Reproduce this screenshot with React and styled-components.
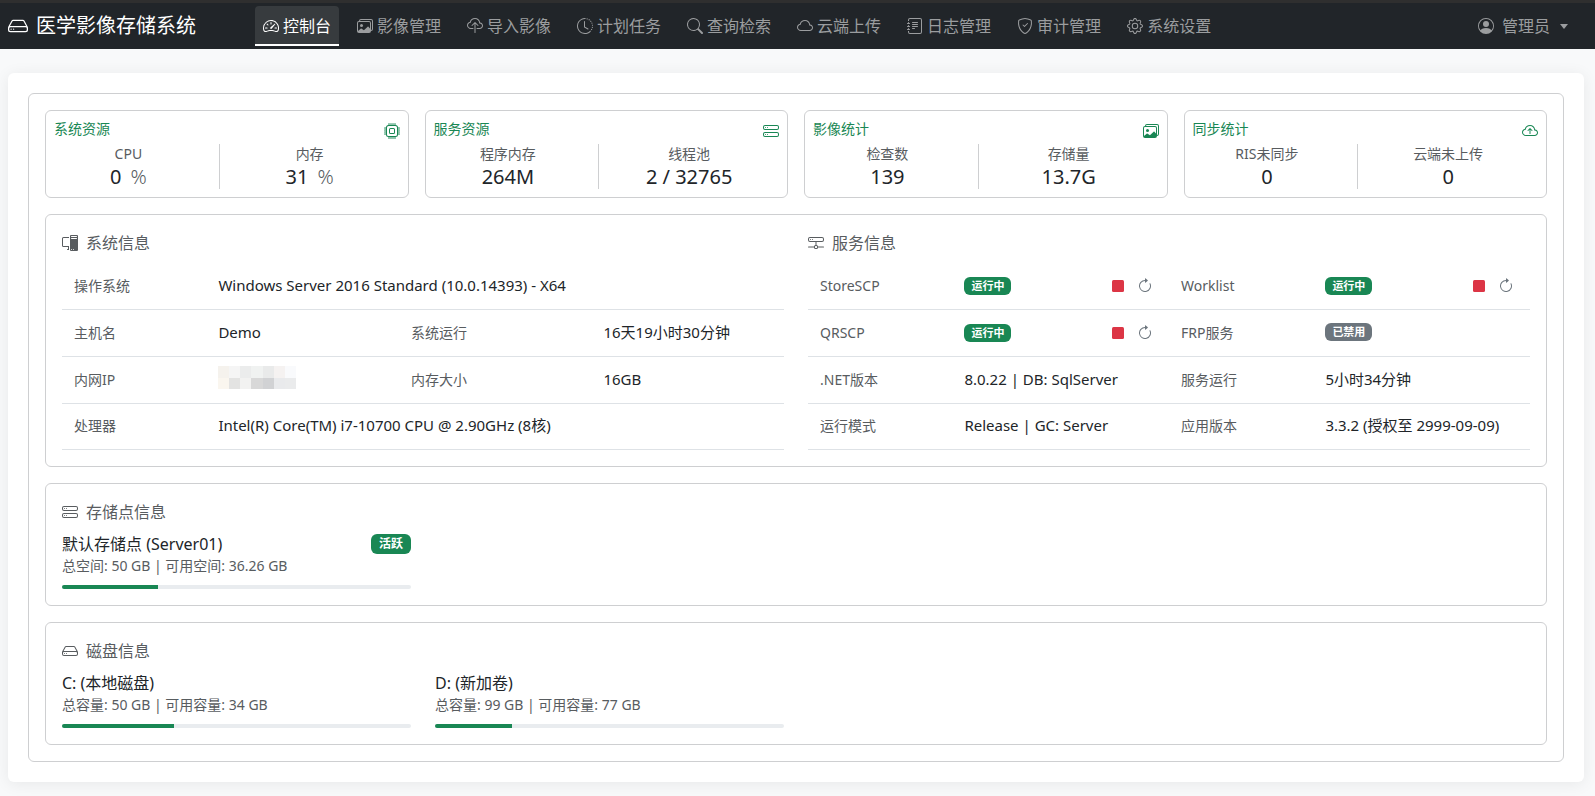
import React from "react";
import styled, { createGlobalStyle, css } from "styled-components";
import {
  BsHdd,
  BsSpeedometer2,
  BsImages,
  BsCloudUpload,
  BsClockHistory,
  BsSearch,
  BsCloud,
  BsJournalText,
  BsShieldCheck,
  BsGear,
  BsPersonCircle,
  BsCpu,
  BsHddStack,
  BsCloudArrowUp,
  BsPcDisplay,
  BsHddNetwork,
  BsSquareFill,
  BsArrowClockwise,
} from "react-icons/bs";

const GlobalStyle = createGlobalStyle`
  *, *::before, *::after { box-sizing: border-box; }
  body {
    margin: 0;
    background: #f8f9fa;
    color: #212529;
    font: 400 16px/24px "Noto Sans", "Noto Sans CJK SC", sans-serif;
  }
  svg { display: block; flex: none; }
`;

const colors = {
  green: "#198754",
  red: "#dc3545",
  gray: "#6c757d",
  muted: "#585c5f",
  border: "#cecfd1",
  line: "#dee2e6",
};

/* ---------- header ---------- */

const Header = styled.header`
  display: flex;
  align-items: center;
  padding: 3px 19px 3px 8px;
  background: #212529;
  border-top: 3px solid #2f2f2f;
`;

const Brand = styled.a`
  display: flex;
  align-items: center;
  gap: 8px;
  width: 247px;
  color: #fff;
  font-size: 20px;
  white-space: nowrap;
  text-decoration: none;
`;

const Nav = styled.nav`
  display: flex;
  flex: 1;
  gap: 10px;
`;

const linkBase = css`
  display: flex;
  align-items: center;
  color: #9b9d9f;
  white-space: nowrap;
`;

const NavLink = styled.a`
  ${linkBase}
  gap: 4px;
  height: 40px;
  padding: 2px 8px 0;
  border-bottom: 2px solid transparent;
  border-radius: 4px 4px 0 0;
  text-decoration: none;
  ${({ $active }) =>
    $active &&
    css`
      color: #fff;
      background: #373b3e;
      border-bottom-color: #fff;
    `}
`;

const UserButton = styled.button`
  ${linkBase}
  gap: 8px;
  padding: 8px;
  border: 0;
  background: none;
  font: inherit;
`;

const Caret = styled.span`
  margin-left: 2px;
  border: 4px solid transparent;
  border-top: 5px solid currentColor;
  border-bottom: 0;
`;

/* ---------- page frame ---------- */

const Main = styled.main`
  padding: 24px 11px 14px 8px;
`;

const Sheet = styled.div`
  padding: 20px;
  background: #fff;
  border-radius: 6px;
  box-shadow: 0 2px 16px rgba(0, 0, 0, 0.07);
`;

const Frame = styled.div`
  display: grid;
  gap: 16px;
  padding: 16px;
  border: 1px solid ${colors.border};
  border-radius: 6px;
`;

const Stats = styled.div`
  display: grid;
  grid-template-columns: repeat(4, 1fr);
  gap: 16px;
`;

/* ---------- stat cards ---------- */

const StatCard = styled.section`
  padding: 8px;
  border: 1px solid ${colors.border};
  border-radius: 6px;
`;

const StatHead = styled.div`
  display: flex;
  justify-content: space-between;
  height: 25px;
  color: ${colors.green};

  svg { margin-top: 4px; }
`;

const StatTitle = styled.h2`
  margin: 0;
  font-size: 14px;
  font-weight: 400;
  line-height: 19px;
`;

const StatPair = styled.div`
  display: grid;
  grid-template-columns: 1fr 1fr;
  margin-left: -16px;
  text-align: center;
`;

const Stat = styled.div`
  & + & { border-left: 1px solid ${colors.border}; }
`;

const StatLabel = styled.div`
  margin-bottom: 2px;
  color: ${colors.muted};
  font-size: 14px;
  line-height: 19px;
`;

const StatValue = styled.div`
  font-size: 20px;
  line-height: 24px;
`;

const Unit = styled.span`
  margin-left: 4px;
  color: ${colors.muted};
  font-weight: 300;
`;

/* ---------- panels ---------- */

const PanelBox = styled.section`
  padding: 16px;
  border: 1px solid ${colors.border};
  border-radius: 6px;
`;

const Heading = styled.h2`
  display: flex;
  align-items: center;
  gap: 8px;
  margin: 0 0 8px;
  color: ${colors.muted};
  font-size: 16px;
  font-weight: 400;
`;

const Halves = styled.div`
  display: grid;
  grid-template-columns: 1fr 1fr;
  gap: 24px;
`;

const InfoTable = styled.table`
  width: 100%;
  table-layout: fixed;
  border-collapse: separate;
  border-spacing: 0;
  line-height: 21px;
`;

const Col = styled.col`
  width: ${({ $width }) => $width || "auto"};
`;

const Row = styled.tr`
  th, td {
    height: 47px;
    padding: 0 12px 2px;
    border-bottom: 1px solid ${colors.line};
    text-align: left;
    white-space: nowrap;
  }
  &:last-child th, &:last-child td { height: 46px; }
  th { color: ${colors.muted}; font-size: 14px; font-weight: 400; }
  td { font-size: 15px; }
`;

const ServiceState = styled.div`
  display: flex;
  align-items: center;
  justify-content: space-between;
  padding-top: ${({ $running }) => ($running ? 2 : 0)}px;
`;

const Badge = styled.span`
  padding: 0 ${({ $large }) => ($large ? 8 : 7)}px;
  border-radius: 6px;
  background: ${({ $off }) => ($off ? colors.gray : colors.green)};
  color: #fff;
  font-size: ${({ $large }) => ($large ? 12 : 11)}px;
  font-weight: 700;
  line-height: ${({ $large }) => ($large ? 20 : 18)}px;
`;

const Actions = styled.div`
  display: flex;
  gap: 3px;
`;

const IconButton = styled.button`
  display: flex;
  align-items: center;
  justify-content: center;
  width: 24px;
  height: 24px;
  padding: 0;
  border: 0;
  background: none;
  color: ${({ $danger }) => ($danger ? colors.red : colors.gray)};
`;

const Mosaic = styled.svg`
  margin-bottom: 4px;
`;

const VolumeGrid = styled.div`
  display: grid;
  grid-template-columns: repeat(4, 1fr);
  gap: 24px;
`;

const VolumeHead = styled.div`
  display: flex;
  align-items: center;
  justify-content: space-between;
`;

const VolumeName = styled.h3`
  margin: 0;
  font-size: 16px;
  font-weight: 400;
`;

const VolumeSize = styled.div`
  margin-bottom: 10px;
  color: ${colors.muted};
  font-size: 14px;
  line-height: 19px;
`;

const Track = styled.div`
  height: 4px;
  overflow: hidden;
  border-radius: 2px;
  background: #e9ecef;
`;

const Fill = styled.div`
  height: 100%;
  background: ${colors.green};
`;

/* ---------- data ---------- */

const navItems = [
  [BsSpeedometer2, "控制台"],
  [BsImages, "影像管理"],
  [BsCloudUpload, "导入影像"],
  [BsClockHistory, "计划任务"],
  [BsSearch, "查询检索"],
  [BsCloud, "云端上传"],
  [BsJournalText, "日志管理"],
  [BsShieldCheck, "审计管理"],
  [BsGear, "系统设置"],
];

const stats = [
  { title: "系统资源", icon: BsCpu, items: [["CPU", "0", "%"], ["内存", "31", "%"]] },
  { title: "服务资源", icon: BsHddStack, items: [["程序内存", "264M"], ["线程池", "2 / 32765"]] },
  { title: "影像统计", icon: BsImages, items: [["检查数", "139"], ["存储量", "13.7G"]] },
  { title: "同步统计", icon: BsCloudArrowUp, items: [["RIS未同步", "0"], ["云端未上传", "0"]] },
];

const maskColors = [
  ["#f5f2ed", "#f5f5f5", "#ebecec", "#f0f2f1", "#e9eaea", "#f5f2f1", "#f9fafc"],
  ["#faf6ef", "#e3e3e2", "#f2f2f1", "#d8d8d8", "#d1d2d4", "#e9eaec", "#eaebec"],
];

/* Mosaic that hides the private address. */
function MaskedAddress() {
  return (
    <Mosaic width="78" height="23" viewBox="0 0 7 2" preserveAspectRatio="none" shapeRendering="crispEdges" aria-hidden="true">
      {maskColors.map((row, y) =>
        row.map((fill, x) => <rect key={`${x}-${y}`} x={x} y={y} width="1" height="1" fill={fill} />)
      )}
    </Mosaic>
  );
}

function Service({ running }) {
  return (
    <ServiceState $running={running}>
      <Badge $off={!running}>{running ? "运行中" : "已禁用"}</Badge>
      {running && (
        <Actions>
          <IconButton type="button" $danger aria-label="停止">
            <BsSquareFill size={12} />
          </IconButton>
          <IconButton type="button" aria-label="重启">
            <BsArrowClockwise size={16} />
          </IconButton>
        </Actions>
      )}
    </ServiceState>
  );
}

const systemRows = [
  [["操作系统", "Windows Server 2016 Standard (10.0.14393) - X64"]],
  [["主机名", "Demo"], ["系统运行", "16天19小时30分钟"]],
  [["内网IP", <MaskedAddress />], ["内存大小", "16GB"]],
  [["处理器", "Intel(R) Core(TM) i7-10700 CPU @ 2.90GHz (8核)"]],
];

const serviceRows = [
  [["StoreSCP", <Service running />], ["Worklist", <Service running />]],
  [["QRSCP", <Service running />], ["FRP服务", <Service />]],
  [[".NET版本", "8.0.22 | DB: SqlServer"], ["服务运行", "5小时34分钟"]],
  [["运行模式", "Release | GC: Server"], ["应用版本", "3.3.2 (授权至 2999-09-09)"]],
];

function Info({ icon: Icon, title, rows, widths }) {
  return (
    <div>
      <Heading><Icon size={16} />{title}</Heading>
      <InfoTable>
        <colgroup>
          {widths.map((w, i) => <Col key={i} $width={w} />)}
        </colgroup>
        <tbody>
          {rows.map((row, i) => (
            <Row key={i}>
              {row.map(([label, value]) => (
                <React.Fragment key={label}>
                  <th scope="row">{label}</th>
                  <td colSpan={row.length === 1 ? 3 : 1}>{value}</td>
                </React.Fragment>
              ))}
            </Row>
          ))}
        </tbody>
      </InfoTable>
    </div>
  );
}

function Volume({ name, size, used, status }) {
  return (
    <div>
      <VolumeHead>
        <VolumeName>{name}</VolumeName>
        {status && <Badge $large>{status}</Badge>}
      </VolumeHead>
      <VolumeSize>{size}</VolumeSize>
      <Track role="progressbar" aria-label={name} aria-valuenow={used} aria-valuemin={0} aria-valuemax={100}>
        <Fill style={{ width: `${used}%` }} />
      </Track>
    </div>
  );
}

export default function App() {
  return (
    <>
      <GlobalStyle />
      <Header>
        <Brand href="#"><BsHdd size={20} />医学影像存储系统</Brand>
        <Nav>
          {navItems.map(([Icon, label], i) => (
            <NavLink key={label} href="#" $active={i === 0}>
              <Icon size={16} />{label}
            </NavLink>
          ))}
        </Nav>
        <UserButton type="button"><BsPersonCircle size={16} />管理员<Caret /></UserButton>
      </Header>
      <Main>
        <Sheet>
          <Frame>
            <Stats>
              {stats.map(({ title, icon: Icon, items }) => (
                <StatCard key={title}>
                  <StatHead><StatTitle>{title}</StatTitle><Icon size={16} /></StatHead>
                  <StatPair>
                    {items.map(([label, value, unit]) => (
                      <Stat key={label}>
                        <StatLabel>{label}</StatLabel>
                        <StatValue>{value}{unit && <> <Unit>{unit}</Unit></>}</StatValue>
                      </Stat>
                    ))}
                  </StatPair>
                </StatCard>
              ))}
            </Stats>
            <PanelBox>
              <Halves>
                <Info icon={BsPcDisplay} title="系统信息" rows={systemRows} widths={["20%", "", "", ""]} />
                <Info icon={BsHddNetwork} title="服务信息" rows={serviceRows} widths={["20%", "30%", "20%", "30%"]} />
              </Halves>
            </PanelBox>
            <PanelBox>
              <Heading><BsHddStack size={16} />存储点信息</Heading>
              <VolumeGrid>
                <Volume name="默认存储点 (Server01)" size="总空间: 50 GB | 可用空间: 36.26 GB" used={27.5} status="活跃" />
              </VolumeGrid>
            </PanelBox>
            <PanelBox>
              <Heading><BsHdd size={16} />磁盘信息</Heading>
              <VolumeGrid>
                <Volume name="C: (本地磁盘)" size="总容量: 50 GB | 可用容量: 34 GB" used={32} />
                <Volume name="D: (新加卷)" size="总容量: 99 GB | 可用容量: 77 GB" used={22} />
              </VolumeGrid>
            </PanelBox>
          </Frame>
        </Sheet>
      </Main>
    </>
  );
}
